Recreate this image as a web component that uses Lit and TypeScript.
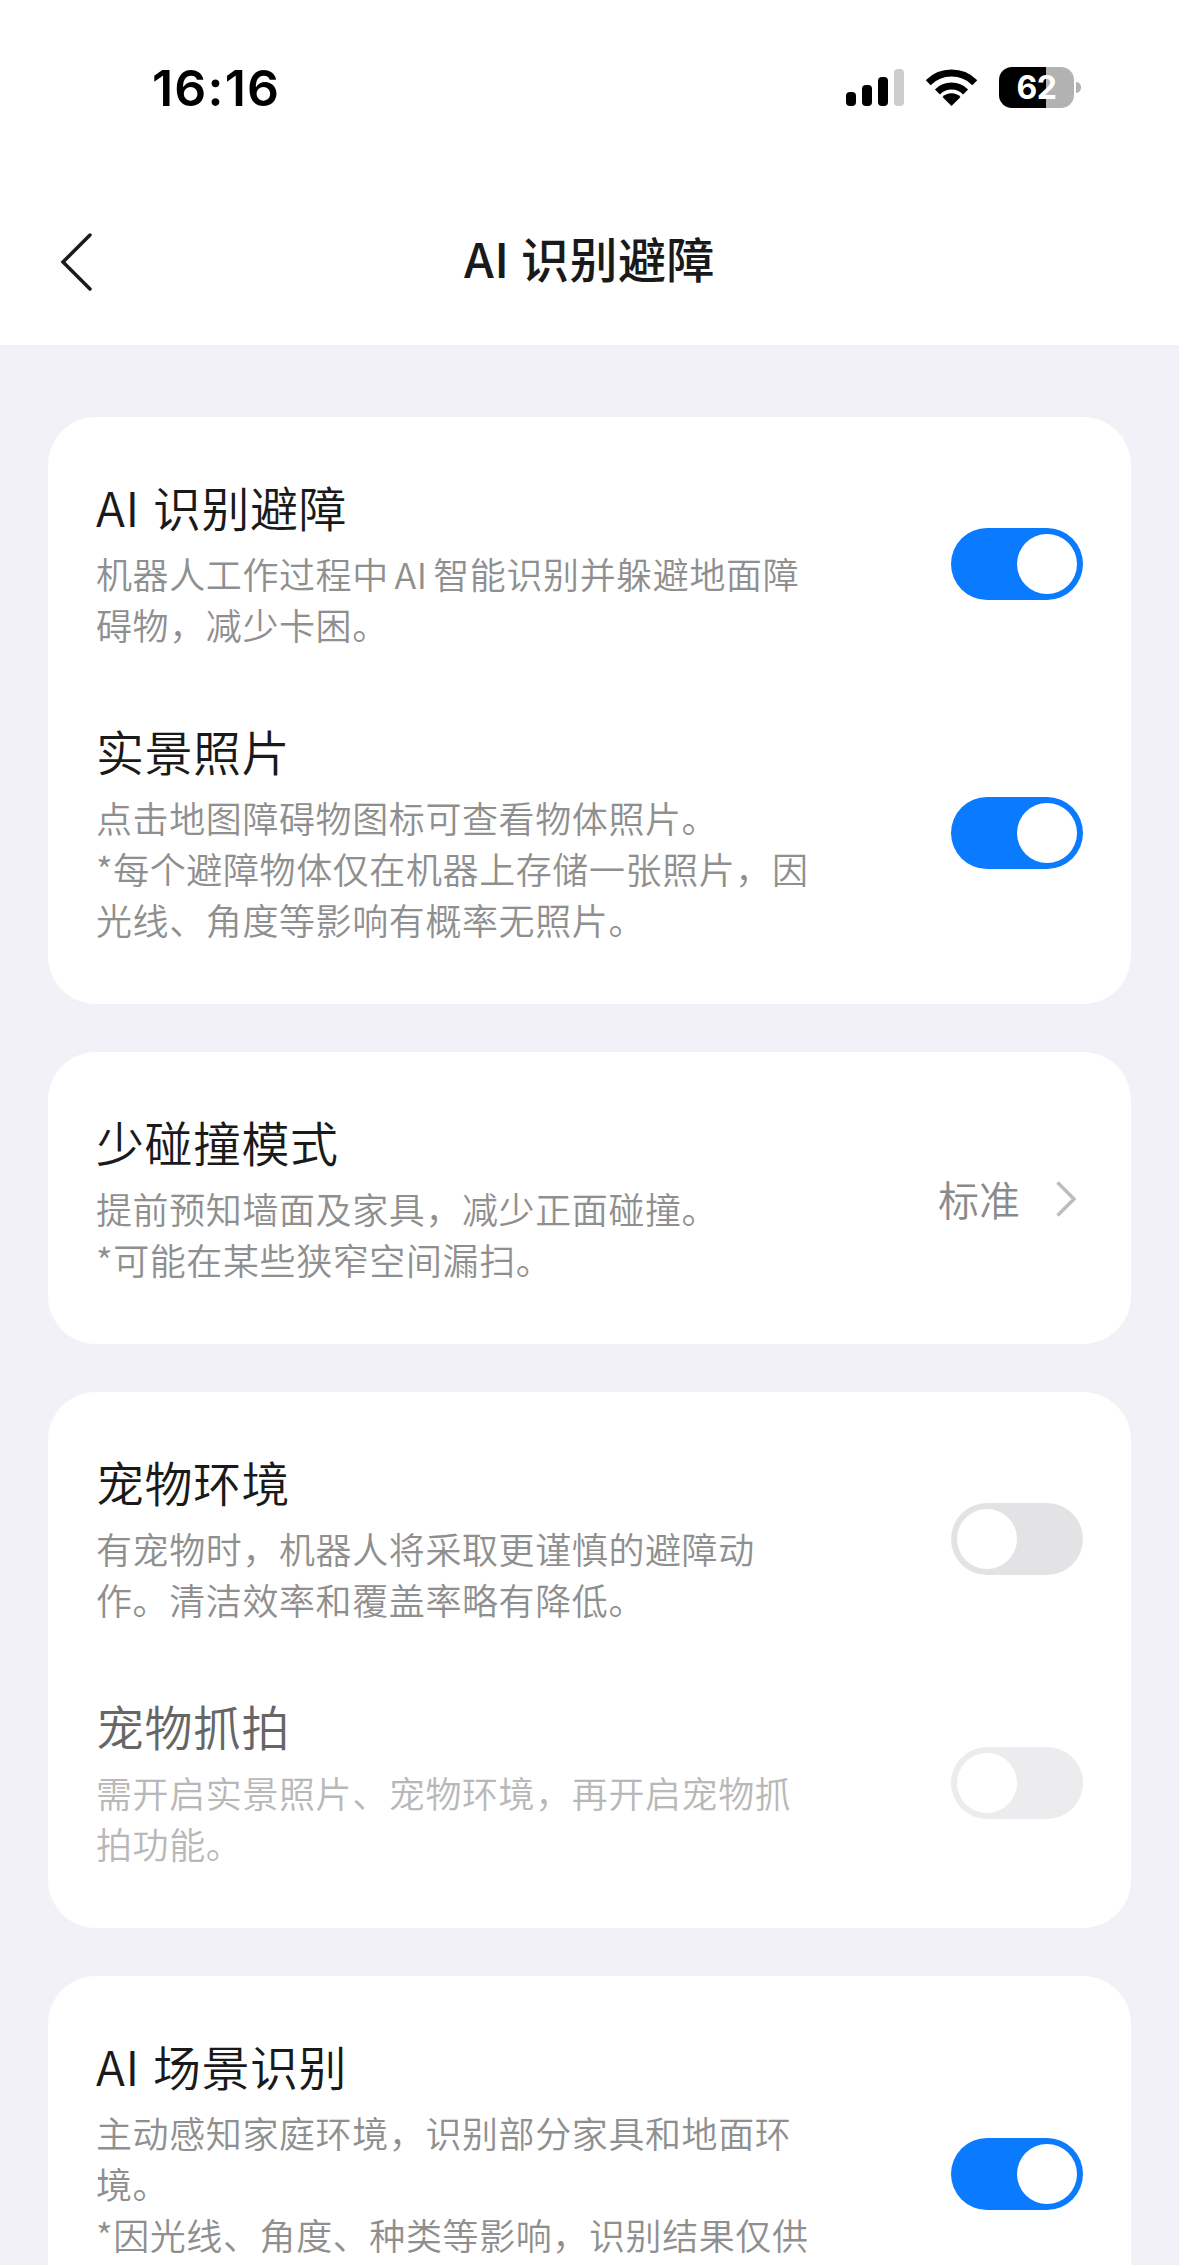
import { LitElement, html, css } from 'lit';
import { customElement } from 'lit/decorators.js';

type Row = {
  title: string;
  lines: string[];
  on?: boolean;
  disabled?: boolean;
  value?: string;
};

const cards: Row[][] = [
  [
    {
      title: 'AI 识别避障',
      lines: ['机器人工作过程中 AI 智能识别并躲避地面障', '碍物，减少卡困。'],
      on: true,
    },
    {
      title: '实景照片',
      lines: [
        '点击地图障碍物图标可查看物体照片。',
        '*每个避障物体仅在机器上存储一张照片，因',
        '光线、角度等影响有概率无照片。',
      ],
      on: true,
    },
  ],
  [
    {
      title: '少碰撞模式',
      lines: ['提前预知墙面及家具，减少正面碰撞。', '*可能在某些狭窄空间漏扫。'],
      value: '标准',
    },
  ],
  [
    {
      title: '宠物环境',
      lines: ['有宠物时，机器人将采取更谨慎的避障动', '作。清洁效率和覆盖率略有降低。'],
    },
    {
      title: '宠物抓拍',
      lines: ['需开启实景照片、宠物环境，再开启宠物抓', '拍功能。'],
      disabled: true,
    },
  ],
  [
    {
      title: 'AI 场景识别',
      lines: [
        '主动感知家庭环境，识别部分家具和地面环',
        '境。',
        '*因光线、角度、种类等影响，识别结果仅供',
        '参考。',
      ],
      on: true,
    },
  ],
];

@customElement('app-root')
export class AppRoot extends LitElement {
  static styles = css`
    :host {
      display: block;
      width: 1179px;
      height: 2265px;
      overflow: hidden;
      background: #f1f1f7;
      font-family: 'Noto Sans CJK SC', 'Liberation Sans', sans-serif;
      color: #1a1a1a;
    }
    .top {
      background: #fff;
      height: 345px;
      display: flex;
      flex-direction: column;
    }
    .status {
      height: 178px;
      display: flex;
      align-items: flex-start;
      justify-content: space-between;
      padding: 59px 98px 0 152px;
      box-sizing: border-box;
    }
    .time {
      font-family: Inter, 'Liberation Sans', sans-serif;
      font-size: 50px;
      font-weight: 600;
      line-height: 58px;
      color: #000;
      letter-spacing: 1.2px;
    }
    .indicators {
      display: flex;
      align-items: center;
      margin-top: 8px;
    }
    .signal {
      display: flex;
      align-items: flex-end;
      gap: 6px;
      height: 37px;
      margin-right: 22px;
    }
    .signal i {
      width: 10px;
      border-radius: 4px;
      background: #000;
    }
    .signal i:nth-child(1) { height: 14px; }
    .signal i:nth-child(2) { height: 21px; }
    .signal i:nth-child(3) { height: 29px; }
    .signal i:nth-child(4) { height: 37px; background: #ccc; }
    .wifi {
      width: 51px;
      height: 37px;
      margin-right: 22px;
    }
    .battery {
      width: 75px;
      height: 41px;
      border-radius: 13px;
      background: linear-gradient(90deg, #000 47px, #b2b2b2 47px);
      color: #fff;
      font-family: Inter, 'Liberation Sans', sans-serif;
      font-size: 32px;
      font-weight: 700;
      line-height: 41px;
      text-align: center;
      letter-spacing: -0.5px;
    }
    .nub {
      width: 5px;
      height: 11px;
      margin-left: 2px;
      background: #b2b2b2;
      border-radius: 0 6px 6px 0;
    }
    .nav {
      flex: 1;
      display: grid;
      grid-template-columns: 1fr auto 1fr;
      align-items: center;
      padding: 0 60px;
    }
    .back {
      width: 32px;
      height: 58px;
      display: block;
    }
    .nav h1 {
      margin: 0 0 10px;
      font-size: 48px;
      font-weight: 500;
      line-height: 64px;
      color: #1a1a1a;
      letter-spacing: 0.5px;
    }
    .cards {
      display: flex;
      flex-direction: column;
      gap: 48px;
      padding: 71.5px 48px 0;
    }
    .card {
      background: #fff;
      border-radius: 48px;
      padding: 60px 48px 58px;
      display: flex;
      flex-direction: column;
      gap: 70px;
    }
    .row {
      display: flex;
      align-items: center;
      justify-content: space-between;
    }
    .text {
      padding-bottom: 1px;
    }
    .title {
      font-size: 48px;
      font-weight: 350;
      line-height: 58px;
      color: #1a1a1a;
      margin-bottom: 13px;
      letter-spacing: 0.5px;
      word-spacing: 2px;
    }
    .line {
      font-size: 36px;
      font-weight: 350;
      line-height: 51px;
      color: #8f8f8f;
      white-space: nowrap;
      letter-spacing: 0.6px;
      word-spacing: -3px;
    }
    .disabled .title { color: #666; }
    .disabled .line { color: #b8b8b8; }
    .toggle {
      width: 132px;
      height: 72px;
      border-radius: 36px;
      background: #e3e3e5;
      padding: 6px;
      box-sizing: border-box;
      display: flex;
      flex-shrink: 0;
    }
    .toggle.on {
      background: #0a7aff;
      justify-content: flex-end;
    }
    .toggle.off-muted { background: #ececee; }
    .knob {
      width: 60px;
      height: 60px;
      border-radius: 50%;
      background: #fff;
    }
    .pick {
      display: flex;
      align-items: center;
      gap: 36px;
      font-size: 41px;
      font-weight: 350;
      color: #8a8a8a;
      margin-right: 7px;
    }
    .pick span {
      margin-bottom: 2px;
    }
    .pick svg {
      width: 20px;
      height: 36px;
    }
  `;

  renderControl(row: Row) {
    if (row.value) {
      return html`<div class="pick">
        <span>${row.value}</span>
        <svg viewBox="0 0 20 36" fill="none" stroke="#bdbdbd" stroke-width="3.5">
          <path d="M1.5 1.5 L18 18 L1.5 34.5" />
        </svg>
      </div>`;
    }
    const cls = row.on ? 'on' : row.disabled ? 'off-muted' : '';
    return html`<div class="toggle ${cls}"><div class="knob"></div></div>`;
  }

  render() {
    return html`
      <div class="top">
        <div class="status">
          <div class="time">16:16</div>
          <div class="indicators">
            <div class="signal"><i></i><i></i><i></i><i></i></div>
            <svg class="wifi" viewBox="0 0 51 37" fill="none" stroke="#000" stroke-width="7">
              <path d="M2.2 13.7 A33 33 0 0 1 48.8 13.7" />
              <path d="M11.4 22.9 A20 20 0 0 1 39.6 22.9" />
              <path d="M25.5 37 L16.5 28 A12.7 12.7 0 0 1 34.5 28 Z" fill="#000" stroke="none" />
            </svg>
            <div class="battery">62</div>
            <div class="nub"></div>
          </div>
        </div>
        <div class="nav">
          <svg class="back" viewBox="0 0 32 58" fill="none" stroke="#1a1a1a" stroke-width="3.5" stroke-linecap="round">
            <path d="M30 2 L3 29 L30 56" />
          </svg>
          <h1>AI 识别避障</h1>
          <span></span>
        </div>
      </div>
      <div class="cards">
        ${cards.map(
          (rows) => html`<div class="card">
            ${rows.map(
              (row) => html`<div class="row ${row.disabled ? 'disabled' : ''}">
                <div class="text">
                  <div class="title">${row.title}</div>
                  ${row.lines.map((l) => html`<div class="line">${l}</div>`)}
                </div>
                ${this.renderControl(row)}
              </div>`
            )}
          </div>`
        )}
      </div>
    `;
  }
}
